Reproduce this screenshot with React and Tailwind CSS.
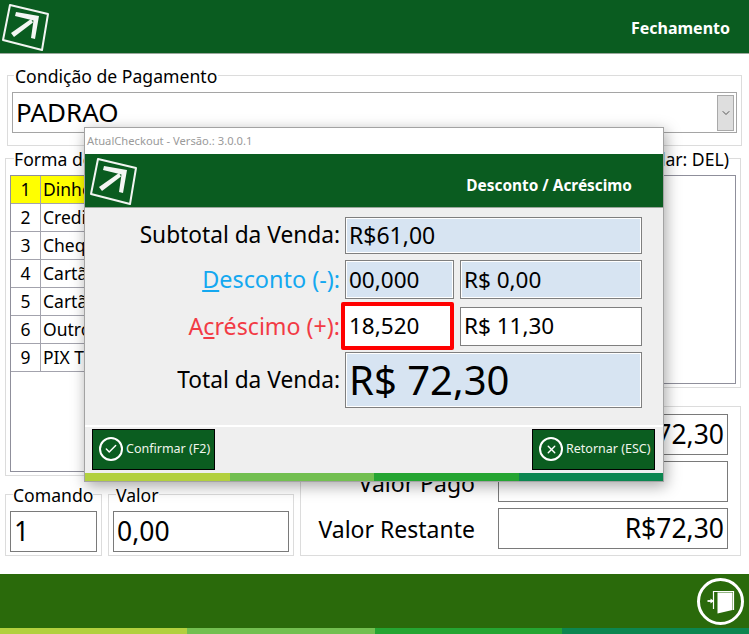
import { Check, ChevronDown, X } from 'lucide-react';

const PAYMENTS = [
  ['1', 'Dinheiro'],
  ['2', 'Crediário'],
  ['3', 'Cheque'],
  ['4', 'Cartão de Crédito'],
  ['5', 'Cartão de Débito'],
  ['6', 'Outros'],
  ['9', 'PIX Transferência'],
];

function Logo() {
  return (
    <svg width="50" height="50" viewBox="0 0 50 50" className="block">
      <polygon points="10,3 48,12 42,48 3,38" fill="none" stroke="#f2f5f2" strokeWidth="2" strokeLinejoin="round" />
      <polygon points="16,10 39,14 35,37 31,36 33.5,18.5 15,14" fill="#f4f6f4" />
      <polygon points="11,31 31,17 33,20.5 14,35" fill="#f4f6f4" />
    </svg>
  );
}

function Stripe({ className }) {
  return (
    <div className={`flex shrink-0 ${className}`}>
      <div className="flex-1 bg-[#b2d03e]" />
      <div className="flex-1 bg-[#72bf50]" />
      <div className="flex-1 bg-[#25a532]" />
      <div className="flex-1 bg-[#0c8650]" />
    </div>
  );
}

function Legend({ children, className = '' }) {
  return <span className={`absolute top-[-10px] bg-white text-[17.6px] leading-[20px] text-black ${className}`}>{children}</span>;
}

function ValueBox({ children, className = '' }) {
  return (
    <div className={`flex h-[41px] items-center overflow-hidden border border-[#7a7a7a] bg-white text-[26.5px] text-black ${className}`}>
      {children}
    </div>
  );
}

function ReadOnly({ children, className = '' }) {
  return (
    <div className={`flex items-center border border-[#7f7f7f] bg-[#d7e4f2] pl-[3px] shadow-[inset_0_0_0_1px_#fff] text-black ${className}`}>
      {children}
    </div>
  );
}

function ActionButton({ icon, label }) {
  return (
    <button className="flex h-[41px] w-[123px] items-center gap-[3px] border border-black bg-[#0b5d20] pl-[6px] text-[12.5px] text-[#f0f5ec]">
      <span className="flex size-[24px] shrink-0 items-center justify-center rounded-full border-2 border-white">{icon}</span>
      <span className="whitespace-nowrap">{label}</span>
    </button>
  );
}

export default function App() {
  return (
    <div className="relative flex h-[634px] w-[749px] flex-col overflow-hidden bg-white font-['Noto_Sans',sans-serif]">
      {/* Top bar */}
      <header className="flex h-[54px] shrink-0 items-center justify-between border-b border-[#9aa79c] bg-[#0a5c20] pr-[19px]">
        <Logo />
        <span className="pt-[3px] text-[16px] font-bold text-white">Fechamento</span>
      </header>

      {/* Condição de Pagamento */}
      <section className="relative mx-[7px] mt-[21px] h-[71px] shrink-0 border border-[#dcdcdc] px-[4px] pt-[16px]">
        <Legend className="left-[6px] px-[1px]">Condição de Pagamento</Legend>
        <div className="flex h-[41px] items-center justify-between border border-[#a5a5a5] pl-[3px] pr-[2px] text-[26px] text-black">
          PADRAO
          <span className="flex h-[36px] w-[17px] items-center justify-center border border-[#a9a9a9] bg-[#dedede]">
            <ChevronDown size={12} color="#555" />
          </span>
        </div>
      </section>

      <div className="mt-[12px] flex min-h-0 flex-1">
        {/* Left column */}
        <div className="ml-[5px] flex w-[290px] shrink-0 flex-col">
          <section className="relative h-[318px] border border-r-0 border-[#dcdcdc] px-[4px] pt-[16px]">
            <Legend className="left-[8px] whitespace-nowrap">Forma de Pagamento</Legend>
            <div className="h-[297px] border border-[#8f8f9b]">
              {PAYMENTS.map(([code, name], i) => (
                <div key={code} className={`flex h-[28px] border-b border-[#a3a3ad] text-[17.5px] text-black ${i === 0 ? 'bg-[#ffff00]' : ''}`}>
                  <span className="flex w-[30px] items-center justify-center border-r border-[#a3a3ad]">{code}</span>
                  <span className="flex items-center whitespace-nowrap pl-[2px]">{name}</span>
                </div>
              ))}
            </div>
          </section>
          <div className="mt-[18px] flex gap-[6px]">
            <section className="relative h-[62px] w-[97px] border border-[#dcdcdc] px-[4px] pt-[16px]">
              <Legend className="left-[7px]">Comando</Legend>
              <ValueBox className="pl-[3px]">1</ValueBox>
            </section>
            <section className="relative mr-[1px] h-[62px] flex-1 border border-[#dcdcdc] px-[4px] pt-[16px]">
              <Legend className="left-[7px]">Valor</Legend>
              <ValueBox className="pl-[3px]">0,00</ValueBox>
            </section>
          </div>
        </div>

        {/* Right column */}
        <div className="flex w-[446px] shrink-0 flex-col">
          <section className="relative h-[230px] border border-l-0 border-[#dcdcdc] pr-[4px] pt-[16px]">
            <Legend className="right-[11px] whitespace-nowrap">(Cancelar: DEL)</Legend>
            <div className="h-[209px] border border-l-0 border-[#8f8f9b]" />
          </section>
          <section className="ml-[5px] mt-[18px] flex h-[150px] flex-col gap-[6px] border border-[#dcdcdc] pl-[197px] pr-[12px] pt-[7px]">
            <ValueBox className="justify-end pr-[3px]">R$72,30</ValueBox>
            <div className="relative">
              <span className="absolute right-[253px] top-[5px] whitespace-nowrap text-[23px] text-black">Valor Pago</span>
              <ValueBox />
            </div>
            <div className="relative">
              <span className="absolute right-[253px] top-[4px] whitespace-nowrap text-[23px] text-black">Valor Restante</span>
              <ValueBox className="justify-end pr-[3px]">R$72,30</ValueBox>
            </div>
          </section>
        </div>
      </div>

      {/* Bottom bar */}
      <footer className="flex h-[54px] shrink-0 items-center justify-end bg-[#2a6a0b] pr-[5px]">
        <span className="flex size-[47px] items-center justify-center rounded-full border-[3px] border-white">
          <svg width="30" height="26" viewBox="0 0 30 26">
            <path d="M7.5 21 V3.5 H27.5 V22" fill="none" stroke="#fff" strokeWidth="1.2" />
            <polygon points="11.5,4.5 26.5,4.5 26.5,22 11.5,25.5" fill="#fff" />
            <path d="M1.5 13 H5" stroke="#fff" strokeWidth="1.8" />
            <polygon points="4.5,10.5 8,13 4.5,15.5" fill="#fff" />
          </svg>
        </span>
      </footer>
      <Stripe className="h-[6px]" />

      {/* Desconto / Acréscimo dialog */}
      <div className="absolute left-[84px] top-[127px] flex h-[355px] w-[580px] flex-col border border-[#a3a3a3] bg-[#efefef] shadow-[2px_4px_14px_rgba(0,0,0,0.35)]">
        <div className="flex h-[26px] shrink-0 items-center bg-white pl-[2px] text-[11.2px] text-[#9a9a9a]">AtualCheckout - Versão.: 3.0.0.1</div>
        <div className="flex h-[54px] shrink-0 items-center justify-between border-b border-[#9aa79c] bg-[#0a5c20] pl-[3px] pr-[31px]">
          <Logo />
          <span className="pt-[11px] text-[15.4px] font-bold text-white">Desconto / Acréscimo</span>
        </div>

        <div className="flex flex-1 flex-col">
          <div className="mt-[9px] flex h-[37px] items-center">
            <span className="w-[260px] whitespace-nowrap pr-[5px] text-right text-[22.7px] text-black">Subtotal da Venda:</span>
            <ReadOnly className="h-full w-[297px] text-[23px]">R$61,00</ReadOnly>
          </div>
          <div className="mt-[6px] flex h-[39px] items-center">
            <span className="w-[260px] whitespace-nowrap pr-[5px] text-right text-[23.4px] text-[#14a8f0]"><u>D</u>esconto (-):</span>
            <ReadOnly className="h-full w-[109px] text-[22.5px]">00,000</ReadOnly>
            <ReadOnly className="ml-[6px] h-full w-[182px] text-[22.5px]">R$ 0,00</ReadOnly>
          </div>
          <div className="mt-[3px] flex h-[48px] items-center">
            <span className="w-[256px] whitespace-nowrap pr-[1px] text-right text-[23.2px] text-[#f23b45]">A<u>c</u>réscimo (+):</span>
            <div className="flex h-full w-[113px] items-center rounded-[2px] border-[4px] border-[#ff0000] bg-white pl-[4px] text-[22.5px] text-black">18,520</div>
            <div className="ml-[6px] flex h-[39px] w-[182px] items-center border border-[#7f7f7f] bg-white pl-[3px] text-[22.5px] text-black">R$ 11,30</div>
          </div>
          <div className="mt-[2px] flex h-[56px] items-center">
            <span className="w-[260px] whitespace-nowrap pr-[5px] text-right text-[22.7px] text-black">Total da Venda:</span>
            <ReadOnly className="h-full w-[297px] text-[40px]">R$ 72,30</ReadOnly>
          </div>
        </div>

        <div className="flex h-[48px] shrink-0 items-center justify-between border-t-2 border-white pb-[2px] pl-[7px] pr-[8px]">
          <ActionButton icon={<Check size={14} color="#fff" strokeWidth={2.5} />} label="Confirmar (F2)" />
          <ActionButton icon={<X size={13} color="#fff" strokeWidth={2.5} />} label="Retornar (ESC)" />
        </div>
        <Stripe className="h-[8px]" />
      </div>
    </div>
  );
}
